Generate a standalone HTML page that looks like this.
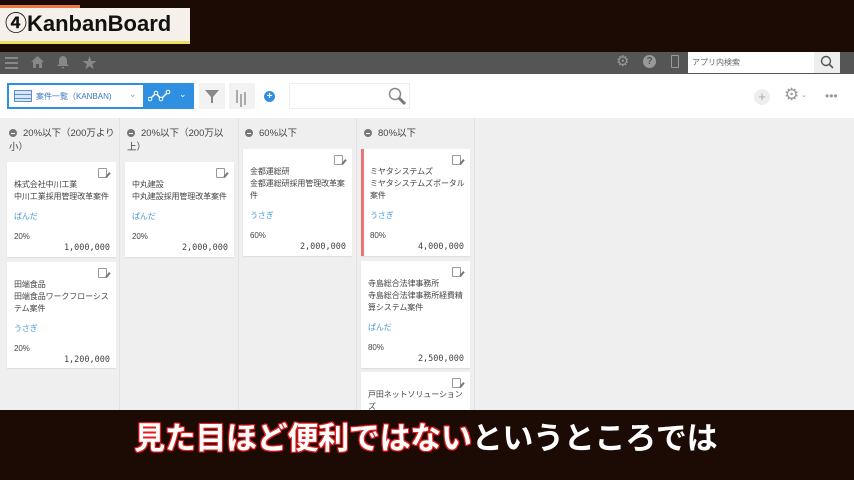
<!DOCTYPE html>
<html><head><meta charset="utf-8"><style>
*{margin:0;padding:0;box-sizing:border-box}
body{width:854px;height:480px;overflow:hidden;background:#1c0a04;font-family:"Liberation Sans","Noto Sans CJK JP",sans-serif;position:relative}
.abs{position:absolute}
.board{left:0;top:118px;width:854px;height:292px;background:#efefef}
.sep{top:118px;width:1px;height:292px;background:#e2e2e2}
.hd{font-size:9.5px;color:#444;line-height:14px}
.hd i{display:inline-block;width:8px;height:8px;border-radius:50%;background:#777;vertical-align:-1px;margin-right:6px;position:relative}
.hd i:after{content:"";position:absolute;left:2px;top:3.5px;width:4px;height:1px;background:#fff}
.card{position:absolute;background:#fff;width:109px;padding:17px 3px 0 7px;font-size:8px;line-height:12px;color:#444;box-shadow:0 1px 1px rgba(0,0,0,.08);letter-spacing:-0.1px}
.card .ed{position:absolute;right:9px;top:6px;width:9px;height:10px;border:1px solid #999;border-radius:1px}
.card .ed:after{content:"";position:absolute;right:-3px;top:3px;width:2px;height:6px;background:#777;transform:rotate(40deg)}
.u{color:#4b9ad8;margin-top:8px}
.p{margin-top:8px}
.a{text-align:right;margin-top:-1px;padding-right:3px;font-family:"DejaVu Sans Mono","Liberation Mono",monospace;font-size:8.5px;letter-spacing:0}
</style></head><body>
<div class="abs" style="left:0;top:5px;width:80px;height:3px;background:#e87a3a"></div>
<div class="abs" style="left:0;top:8px;width:190px;height:36px;background:#f5f0ea;border-bottom:3px solid #e8e060"></div>
<div class="abs" style="left:5px;top:9px;font-size:22px;font-weight:bold;color:#111;line-height:30px">④KanbanBoard</div>
<div class="abs" style="left:0;top:52px;width:854px;height:22px;background:#555"></div>
<div class="abs" style="left:5px;top:57px;width:13px;height:2px;background:#888;box-shadow:0 5px 0 #888,0 10px 0 #888"></div>
<svg class="abs" style="left:30px;top:55px" width="15" height="14"><path d="M7.5,1 L14,7 H12 V13 H9 V9 H6 V13 H3 V7 H1 Z" fill="#888"/></svg>
<svg class="abs" style="left:56px;top:55px" width="14" height="14"><path d="M7,1 C4,1 3,4 3,6 V9 L1,11 H13 L11,9 V6 C11,4 10,1 7,1 Z M5.5,12 H8.5 L7,14 Z" fill="#888"/></svg>
<div class="abs" style="left:82px;top:52px;font-size:15px;color:#888">★</div>
<div class="abs" style="left:616px;top:52px;font-size:15px;color:#999">⚙</div>
<div class="abs" style="left:643px;top:55px;width:13px;height:13px;border-radius:50%;background:#999;color:#555;font-size:10px;font-weight:bold;text-align:center;line-height:13px">?</div>
<div class="abs" style="left:671px;top:55px;width:8px;height:13px;border:1px solid #999;border-radius:1px"></div>
<div class="abs" style="left:688px;top:52px;width:126px;height:21px;background:#fff;font-size:8px;color:#666;padding:5px 4px">アプリ内検索</div>
<div class="abs" style="left:814px;top:52px;width:26px;height:21px;background:#eee"></div>
<svg class="abs" style="left:820px;top:55px" width="14" height="14"><circle cx="6" cy="6" r="4.5" fill="none" stroke="#555" stroke-width="1.4"/><line x1="9" y1="9" x2="13" y2="13" stroke="#555" stroke-width="1.6"/></svg>
<div class="abs" style="left:0;top:74px;width:854px;height:44px;background:#fff"></div>
<div class="abs" style="left:7px;top:83px;width:187px;height:26px;background:#2f8fe0"></div>
<div class="abs" style="left:9px;top:85px;width:134px;height:22px;background:#fff"></div>
<div class="abs" style="left:14px;top:90px;width:18px;height:12px;border:1px solid #5b8fc7;background:repeating-linear-gradient(#d6e6f7 0 3px,#5b8fc7 3px 4px)"></div>
<div class="abs" style="left:36px;top:91px;font-size:8px;color:#3a78c4">案件一覧（KANBAN)</div>
<div class="abs" style="left:129px;top:89px;font-size:9px;color:#999">⌄</div>
<svg class="abs" style="left:148px;top:89px" width="24" height="14"><polyline points="2,10 8,4 13,10 20,3" fill="none" stroke="#fff" stroke-width="1.5"/><circle cx="2" cy="10" r="1.8" fill="#2f8fe0" stroke="#fff"/><circle cx="8" cy="4" r="1.8" fill="#2f8fe0" stroke="#fff"/><circle cx="13" cy="10" r="1.8" fill="#2f8fe0" stroke="#fff"/><circle cx="20" cy="3" r="1.8" fill="#2f8fe0" stroke="#fff"/></svg>
<div class="abs" style="left:179px;top:89px;font-size:9px;color:#fff">⌄</div>
<div class="abs" style="left:199px;top:83px;width:26px;height:26px;background:#f2f2f2"></div>
<svg class="abs" style="left:204px;top:88px" width="16" height="16"><path d="M1,2 H15 L9,9 V15 H7 V9 Z" fill="#888"/></svg>
<div class="abs" style="left:229px;top:83px;width:26px;height:26px;background:#f2f2f2"></div>
<div class="abs" style="left:236px;top:90px;width:2px;height:13px;background:#aaa;box-shadow:4px 4px 0 #aaa,8px 2px 0 #aaa"></div>
<div class="abs" style="left:264px;top:91px;width:11px;height:11px;border-radius:50%;background:#2f8fe0;color:#fff;font-size:10px;font-weight:bold;text-align:center;line-height:11px">+</div>
<div class="abs" style="left:289px;top:83px;width:121px;height:26px;background:#fff;border:1px solid #eee"></div>
<svg class="abs" style="left:388px;top:87px" width="20" height="20"><circle cx="7" cy="7" r="5.5" fill="none" stroke="#888" stroke-width="1.5"/><line x1="11" y1="11" x2="17" y2="17" stroke="#777" stroke-width="3"/></svg>
<div class="abs" style="left:754px;top:89px;width:16px;height:16px;border-radius:50%;background:#eee;color:#aaa;font-size:13px;text-align:center;line-height:16px">+</div>
<div class="abs" style="left:784px;top:85px;font-size:17px;color:#999">⚙</div>
<div class="abs" style="left:801px;top:91px;font-size:7px;color:#999">⌄</div>
<div class="abs" style="left:825px;top:89px;font-size:12px;color:#999">•••</div>
<div class="abs board"></div>
<div class="abs sep" style="left:119px"></div>
<div class="abs sep" style="left:238px"></div>
<div class="abs sep" style="left:356px"></div>
<div class="abs sep" style="left:474px"></div>
<div class="abs hd" style="left:9px;top:127px;width:108px"><i></i>20%以下（200万より小）</div>
<div class="abs hd" style="left:127px;top:127px;width:108px"><i></i>20%以下（200万以上）</div>
<div class="abs hd" style="left:245px;top:127px"><i></i>60%以下</div>
<div class="abs hd" style="left:364px;top:127px"><i></i>80%以下</div>

<div class="card" style="left:7px;top:162px;height:95px"><div class="ed"></div>株式会社中川工業<br>中川工業採用管理改革案件<div class="u">ぱんだ</div><div class="p">20%</div><div class="a">1,000,000</div></div>
<div class="card" style="left:7px;top:262px;height:106px"><div class="ed"></div>田端食品<br>田端食品ワークフローシス<br>テム案件<div class="u">うさぎ</div><div class="p">20%</div><div class="a">1,200,000</div></div>
<div class="card" style="left:125px;top:162px;height:95px"><div class="ed"></div>中丸建設<br>中丸建設採用管理改革案件<div class="u">ぱんだ</div><div class="p">20%</div><div class="a">2,000,000</div></div>
<div class="card" style="left:243px;top:149px;height:107px"><div class="ed"></div>金都運総研<br>金都運総研採用管理改革案<br>件<div class="u">うさぎ</div><div class="p">60%</div><div class="a">2,000,000</div></div>
<div class="card" style="left:361px;top:149px;height:107px;border-left:3px solid #e87878;padding-left:6px"><div class="ed"></div>ミヤタシステムズ<br>ミヤタシステムズポータル<br>案件<div class="u">うさぎ</div><div class="p">80%</div><div class="a">4,000,000</div></div>
<div class="card" style="left:361px;top:261px;height:107px"><div class="ed"></div>寺島総合法律事務所<br>寺島総合法律事務所経費精<br>算システム案件<div class="u">ぱんだ</div><div class="p">80%</div><div class="a">2,500,000</div></div>
<div class="card" style="left:361px;top:372px;height:40px"><div class="ed"></div>戸田ネットソリューション<br>ズ</div>
<div class="abs" style="left:0;top:410px;width:854px;height:70px;background:#1c0a04"></div>
<div class="abs" style="left:134px;top:418px;font-size:31px;font-weight:bold;line-height:42px;white-space:nowrap;letter-spacing:-0.3px"><span style="color:#fff;text-shadow:0 0 2px #e02020,0 0 2px #e02020,1px 1px 0 #e02020,-1px -1px 0 #e02020,1px -1px 0 #e02020,-1px 1px 0 #e02020">見た目ほど便利ではない</span><span style="color:#fff">というところでは</span></div>
</body></html>
